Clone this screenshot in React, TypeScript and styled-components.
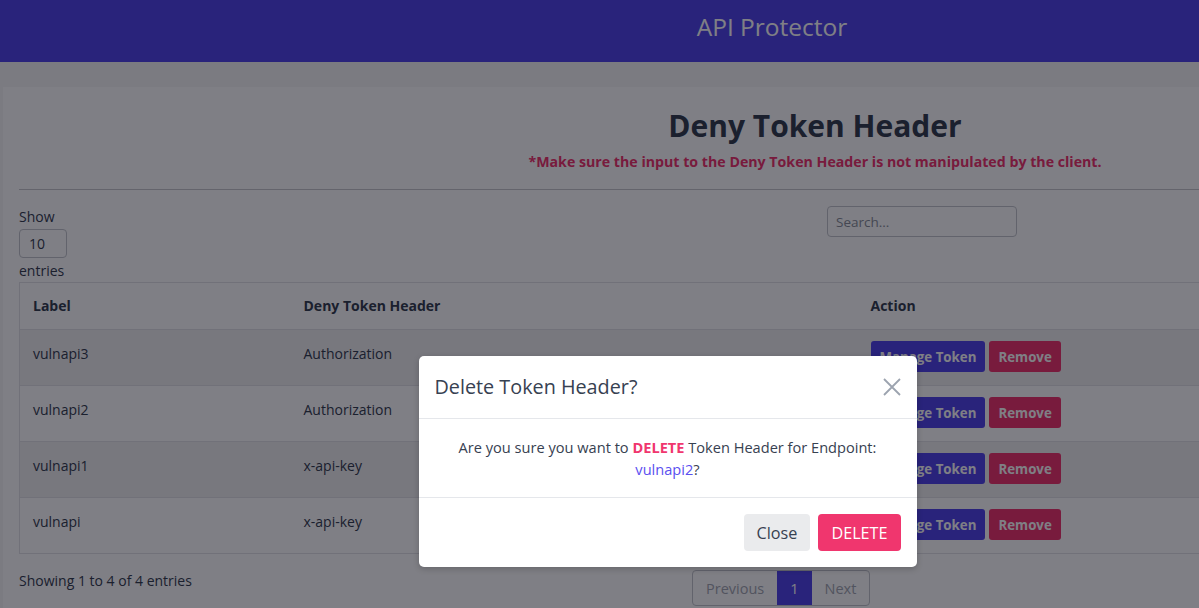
import React from 'react';
import styled, { createGlobalStyle } from 'styled-components';

const GlobalStyle = createGlobalStyle`
  html, body {
    margin: 0;
    padding: 0;
    overflow: hidden;
    background: #f6f6f7;
    font-family: 'Open Sans', 'Noto Sans', sans-serif;
    color: #374151;
  }
  * { box-sizing: border-box; }
`;

const indigo = '#5246eb';
const pink = '#f0366e';

const Page = styled.div`
  width: 1199px;
  height: 608px;
  overflow: hidden;
  position: relative;
`;

const TopBar = styled.header`
  height: 62px;
  background: ${indigo};
  display: grid;
  grid-template-columns: 345px 1fr;
  align-items: center;
`;

const Brand = styled.h1`
  grid-column: 2;
  margin: 0;
  text-align: center;
  font-size: 24.5px;
  font-weight: 500;
  color: #ffffff;
  padding-bottom: 9px;
`;

const Main = styled.main`
  padding: 25px 0 0 3px;
`;

const Card = styled.section`
  width: 1624px;
  background: #ffffff;
  padding: 20px 16px 16px;
`;

const Title = styled.h2`
  margin: 0;
  text-align: center;
  font-size: 30px;
  line-height: 38px;
  font-weight: 700;
  color: #374151;
`;

const Warning = styled.p`
  margin: 6px 0 0;
  text-align: center;
  font-size: 14.2px;
  line-height: 21px;
  font-weight: 700;
  color: ${pink};
`;

const Divider = styled.hr`
  margin: 17px 0 0;
  border: 0;
  border-top: 1px solid #c8c8cd;
`;

const Controls = styled.div`
  display: grid;
  grid-template-columns: 796px 796px;
  padding-top: 16px;
`;

const LengthBox = styled.label`
  display: flex;
  flex-direction: column;
  align-items: flex-start;
  font-size: 14px;
  line-height: 21px;
`;

const SelectBox = styled.div`
  width: 48px;
  height: 29px;
  margin: 2px 0 2px;
  border: 1px solid #c4c6cc;
  border-radius: 4px;
  padding-left: 9px;
  font-size: 14px;
  line-height: 27px;
`;

const SearchInput = styled.input`
  margin: 0 0 0 12px;
  width: 190px;
  height: 31px;
  border: 1px solid #c4c6cc;
  border-radius: 4px;
  padding: 0 8px;
  font-family: inherit;
  font-size: 13.5px;
  color: #374151;
  &::placeholder { color: #8a8f99; }
`;

const Table = styled.table`
  width: 100%;
  margin-top: 1px;
  border-collapse: collapse;
  border: 1px solid #e2e3e6;
  font-size: 14px;
  line-height: 21px;
`;

const HeadCell = styled.th<{ $w?: number }>`
  text-align: left;
  font-weight: 700;
  padding: 12px 13px 13px;
  width: ${({ $w }) => ($w ? `${$w}px` : 'auto')};
`;

const Row = styled.tr<{ $striped: boolean }>`
  background: ${({ $striped }) => ($striped ? '#f0f0f1' : '#ffffff')};
  border-top: 1px solid #e2e3e6;
`;

const Cell = styled.td<{ $actions?: boolean }>`
  padding: ${({ $actions }) => ($actions ? '11px 13px 12px' : '13px 13px 12px')};
  height: 56px;
  vertical-align: top;
`;

const ActionButton = styled.button<{ $tone: 'primary' | 'danger' }>`
  height: 31px;
  border: 0;
  border-radius: 3px;
  padding: 0 9px;
  margin-right: 4px;
  font-family: inherit;
  font-size: 13.3px;
  font-weight: 700;
  color: #ffffff;
  background: ${({ $tone }) => ($tone === 'primary' ? indigo : pink)};
`;

const Footer = styled.div`
  display: grid;
  grid-template-columns: 673px auto;
  align-items: start;
  padding-top: 16px;
`;

const Info = styled.div`
  font-size: 14px;
  line-height: 21px;
`;

const Pager = styled.nav`
  display: flex;
  height: 36px;
  border: 1px solid #c4c6cc;
  border-radius: 4px;
  overflow: hidden;
  width: max-content;
`;

const PageItem = styled.span<{ $active?: boolean }>`
  display: flex;
  align-items: center;
  padding: 0 13px;
  font-size: 14.5px;
  color: ${({ $active }) => ($active ? '#ffffff' : '#a4a8b2')};
  background: ${({ $active }) => ($active ? indigo : 'transparent')};
`;

const Backdrop = styled.div`
  position: absolute;
  inset: 0;
  background: rgba(0, 0, 12, 0.5);
  display: flex;
  justify-content: center;
  align-items: flex-start;
  padding: 356px 0 0 136px;
`;

const Dialog = styled.div`
  width: 498px;
  background: #ffffff;
  border-radius: 5px;
  box-shadow: 0 2px 6px rgba(0, 0, 0, 0.2);
`;

const DialogHead = styled.div`
  display: flex;
  align-items: center;
  justify-content: space-between;
  padding: 16px;
  border-bottom: 1px solid #e5e7eb;
`;

const DialogTitle = styled.h3`
  margin: 0;
  font-size: 19.8px;
  line-height: 30px;
  font-weight: 500;
  color: #374151;
`;

const CloseIcon = styled.button`
  border: 0;
  background: none;
  padding: 0;
  width: 18px;
  height: 18px;
  display: flex;
  color: #9ca3af;
`;

const DialogBody = styled.div`
  padding: 17px 16px;
  text-align: center;
  font-size: 14.6px;
  line-height: 22px;
  border-bottom: 1px solid #e5e7eb;
`;

const Strong = styled.strong`
  color: ${pink};
  font-weight: 700;
`;

const Endpoint = styled.span`
  color: #5a4ff0;
`;

const DialogFoot = styled.div`
  display: flex;
  justify-content: flex-end;
  gap: 8px;
  padding: 16px;
`;

const DialogButton = styled.button<{ $tone: 'plain' | 'danger' }>`
  height: 37px;
  border: 0;
  border-radius: 4px;
  padding: 0 13px;
  font-family: inherit;
  font-size: 16.2px;
  color: ${({ $tone }) => ($tone === 'danger' ? '#ffffff' : '#374151')};
  background: ${({ $tone }) => ($tone === 'danger' ? pink : '#eaebed')};
`;

const rows = [
  { label: 'vulnapi3', header: 'Authorization' },
  { label: 'vulnapi2', header: 'Authorization' },
  { label: 'vulnapi1', header: 'x-api-key' },
  { label: 'vulnapi', header: 'x-api-key' },
];

const App: React.FC = () => (
  <Page>
    <GlobalStyle />
    <TopBar>
      <Brand>API Protector</Brand>
    </TopBar>
    <Main>
      <Card>
        <Title>Deny Token Header</Title>
        <Warning>*Make sure the input to the Deny Token Header is not manipulated by the client.</Warning>
        <Divider />
        <Controls>
          <LengthBox>
            Show
            <SelectBox>10</SelectBox>
            entries
          </LengthBox>
          <div>
            <SearchInput placeholder="Search..." />
          </div>
        </Controls>
        <Table>
          <thead>
            <tr>
              <HeadCell $w={271}>Label</HeadCell>
              <HeadCell $w={567}>Deny Token Header</HeadCell>
              <HeadCell>Action</HeadCell>
            </tr>
          </thead>
          <tbody>
            {rows.map((r, i) => (
              <Row key={r.label} $striped={i % 2 === 0}>
                <Cell>{r.label}</Cell>
                <Cell>{r.header}</Cell>
                <Cell $actions>
                  <ActionButton $tone="primary">Manage Token</ActionButton>
                  <ActionButton $tone="danger">Remove</ActionButton>
                </Cell>
              </Row>
            ))}
          </tbody>
        </Table>
        <Footer>
          <Info>Showing 1 to 4 of 4 entries</Info>
          <Pager>
            <PageItem>Previous</PageItem>
            <PageItem $active>1</PageItem>
            <PageItem>Next</PageItem>
          </Pager>
        </Footer>
      </Card>
    </Main>
    <Backdrop>
      <Dialog role="dialog" aria-labelledby="dlg-title">
        <DialogHead>
          <DialogTitle id="dlg-title">Delete Token Header?</DialogTitle>
          <CloseIcon aria-label="Close">
            <svg width="18" height="18" viewBox="0 0 18 18" fill="none" stroke="currentColor" strokeWidth="1.8">
              <path d="M1 1L17 17M17 1L1 17" />
            </svg>
          </CloseIcon>
        </DialogHead>
        <DialogBody>
          Are you sure you want to <Strong>DELETE</Strong> Token Header for Endpoint:
          <br />
          <Endpoint>vulnapi2</Endpoint>?
        </DialogBody>
        <DialogFoot>
          <DialogButton $tone="plain">Close</DialogButton>
          <DialogButton $tone="danger">DELETE</DialogButton>
        </DialogFoot>
      </Dialog>
    </Backdrop>
  </Page>
);

export default App;
